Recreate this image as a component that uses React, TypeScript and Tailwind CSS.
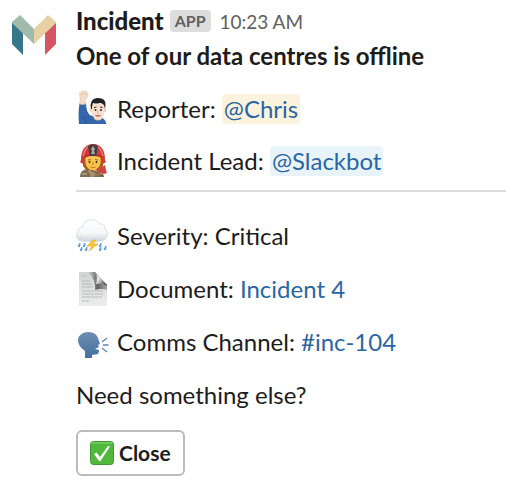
import type { ReactNode } from "react";

function Logo() {
  return (
    <svg viewBox="0 0 44 42" className="mt-[14px] h-[42px] w-11 shrink-0" aria-hidden="true">
      <path d="M0 8v22l11 11V14z" fill="#38768b" />
      <path d="M44 8v22L33 41V14z" fill="#d65563" />
      <path d="M0 9V8l8-7 14 14v15z" fill="#a1bbaa" />
      <path d="M44 9V8l-8-7-14 14v15z" fill="#e7d0a3" />
    </svg>
  );
}

function RaisedHand() {
  return (
    <svg viewBox="0 0 32 34" className="h-[34px] w-8 overflow-visible">
      <path d="M3 32Q2 20 3.500 11.500l6-.5q0 8 4 12l6 2h3q7 1 8 7z" fill="#3566ad" />
      <path d="M9.500 12q0 8 4 12M7 24q3 3 3 8" fill="none" stroke="#274f92" strokeWidth=".8" />
      <path d="M4 12 4 5 3.500 1q.7-1.200 1.500 0l.8 2L6 -1q1-1 1.600 0l.4 3 1-3q1-.8 1.500.3L10 3l1-2q1-.5 1.200.8L11 6l-2 2 .5 4q-3 1-5.500 0z" fill="#f3dcc8" stroke="#dcbda4" strokeWidth=".5" />
      <path d="M18 23h8v4q-4 3-8 0z" fill="#e6c0a3" />
      <ellipse cx="15" cy="18" rx="1.200" ry="2" fill="#e9c7ad" />
      <ellipse cx="29" cy="18" rx="1.200" ry="2" fill="#e9c7ad" />
      <path d="M15.500 12h13v7q-.5 8-6.500 9-6-1-6.500-9z" fill="#f6e0cd" />
      <path d="M15 17Q13 7 21 6q9-.5 8.500 7L29 17l-1-4q-2-2-4-2-4 1-7 0-1 2-1 6z" fill="#24211f" />
      <path d="m18 15.500 2.500-.5m3.500 0 2.500.5" stroke="#352b26" />
      <circle cx="19.500" cy="18" r="1" fill="#3b2d28" />
      <circle cx="25" cy="18" r="1" fill="#3b2d28" />
      <path d="m22 18-.5 3.500h1.500" fill="none" stroke="#dcb295" strokeWidth=".8" />
      <path d="M19.500 23.500q2.500 2.500 5 0z" fill="#fff" stroke="#b0665a" strokeWidth=".8" />
    </svg>
  );
}

function Firefighter() {
  return (
    <svg viewBox="0 0 32 34" className="h-[34px] w-8 overflow-visible">
      <path d="M4 33q0-7 7-8h10q6 1 7 8z" fill="#7d6b56" />
      <path d="m11 25 4 8h3l4-8z" fill="#a3906c" />
      <path d="M6 30h5m10 0h5" stroke="#b9ad78" strokeWidth="1.500" />
      <path d="M7 12h20v10l-3 4H10l-3-4z" fill="#a85d22" />
      <path d="M9.500 12h15v7q-1 6-7.500 8-6.500-2-7.500-8z" fill="#fbc64b" />
      <path d="M5 16Q5 2 15 0h4q10 2 10 16l1 2-3 2q0-5-3-7-7-2-14 0-3 2-3 7l-3-2z" fill="#d33a3a" />
      <path d="M7 12q2-8 6-10m14 10q-2-8-6-10" fill="none" stroke="#ec7868" strokeWidth="1.500" />
      <path d="M8 13q9-4 18 0" fill="none" stroke="#a82228" strokeWidth="1.200" />
      <path d="m17 0 2 1 3 1-1 6-1 4h-6l-1-4-1-6 3-1z" fill="#3f3f42" />
      <path d="m17 2 2 3-1 2 1 3h-4l1-3-1-2z" fill="#aaa7a5" />
      <path d="m12 16 3-.5m4 0 3 .5" stroke="#8b5a1a" strokeWidth=".8" />
      <ellipse cx="13.500" cy="18" rx=".9" ry="1.200" fill="#4f3018" />
      <ellipse cx="20.500" cy="18" rx=".9" ry="1.200" fill="#4f3018" />
      <path d="M17 18v3M14.500 23q2.500 1.500 5 0" fill="none" stroke="#c2652d" strokeWidth=".9" />
      <path d="m15 26 12 6" stroke="#92502b" strokeWidth="1.200" />
      <path d="m21 24 5-1 3-2 1 5 1 3-3 1-3-2-4 1z" fill="#cf4444" />
    </svg>
  );
}

function StormCloud() {
  return (
    <svg viewBox="0 0 32 34" className="h-[34px] w-8 overflow-visible">
      <defs>
        <linearGradient id="cloud" x2="0" y2="1">
          <stop stopColor="#ffffff" />
          <stop offset=".6" stopColor="#f5f7f8" />
          <stop offset="1" stopColor="#cbd2da" />
        </linearGradient>
      </defs>
      <path d="M7 22C1 22-1 17 2 13q0-5 5-5Q8 1 15 1q6-1 8 4 6-1 6 5 4 3 2 7-1 5-7 5-2 1-5 0-4 2-7 0-3 1-5 0z" fill="url(#cloud)" stroke="#cfd5da" strokeWidth=".7" />
      <path d="M4 17q1 4 6 3 3 3 7 0 5 2 8-1" fill="none" stroke="#d5dce3" />
      <path d="m4 24-2 3q1 2 2 0zm5 0-2 3q1 2 2 0zm16 0-2 3q1 2 2 0zm5 3-2 3q1 2 2 0zM6 28l-2 3q1 2 2 0zm5 0-2 3q1 2 2 0zm14 0-2 3q1 2 2 0z" fill="#69aee0" stroke="#4a93cc" strokeWidth=".7" />
      <path d="m17 21-6 6h5l-3 5 9-7h-5l3-4z" fill="#ffc633" stroke="#f0a12a" strokeWidth=".6" />
    </svg>
  );
}

function PageIcon() {
  return (
    <svg viewBox="0 0 32 34" className="h-[34px] w-8 overflow-visible">
      <defs>
        <linearGradient id="paper" x2="0" y2="1">
          <stop stopColor="#d3d4d4" />
          <stop offset="1" stopColor="#ececec" />
        </linearGradient>
        <linearGradient id="fold" x2="1" y2=".7">
          <stop stopColor="#8e9190" />
          <stop offset=".4" stopColor="#e9eaea" />
          <stop offset=".75" stopColor="#8c8f8e" />
          <stop offset="1" stopColor="#4e5251" />
        </linearGradient>
        <linearGradient id="shade" x1="0" x2="1">
          <stop stopColor="#6e7271" stopOpacity="0" />
          <stop offset=".5" stopColor="#5e6261" />
          <stop offset="1" stopColor="#a8abaa" />
        </linearGradient>
      </defs>
      <path d="M3 0h16l12 13v21H3z" fill="url(#paper)" />
      <path d="M12 0h7l12 13v5q-6-2-12 0 1-10-7-18z" fill="url(#shade)" />
      <path d="M19 0q3 6 1 12 7-1 11 2v-1z" fill="url(#fold)" />
      <path d="M6 4h5M6 9h8M6 12h10M6 15h11M6 19h21M6 22h21M6 25h20M6 29h7" stroke="#a9acac" strokeWidth=".8" strokeDasharray="3 .6 5 .5" />
    </svg>
  );
}

function SpeakingHead() {
  return (
    <svg viewBox="0 0 32 34" className="h-[34px] w-8 overflow-visible">
      <defs>
        <linearGradient id="head" x2="0" y2="1">
          <stop stopColor="#6f8db0" />
          <stop offset="1" stopColor="#44709f" />
        </linearGradient>
      </defs>
      <path d="M9 33v-7Q2 21 2 15.500C2 10 7 7 12.500 7q7.500 0 9.500 6l2 6-2 1 1 2-4 2 4 1q0 5-4 4.500l-3 .5v3z" fill="url(#head)" />
      <path d="m26 17 5-4m-4 7h5.500m-6.500 3 5 4" stroke="#6185ab" strokeWidth="1.300" />
    </svg>
  );
}

function CheckIcon() {
  return (
    <svg viewBox="0 0 24 24" className="size-6" aria-hidden="true">
      <rect x=".5" y=".5" width="23" height="23" rx="3" fill="#50b83b" stroke="#3e9b32" />
      <path d="M2 2h20" stroke="#91d482" />
      <path d="m4 13 2.500-1.500L10 16l8-11 2 .5L10.500 20H9z" fill="#fff" />
    </svg>
  );
}

function Field({ icon, label, children }: { icon: ReactNode; label: string; children: ReactNode }) {
  return (
    <li className="flex h-8 items-center gap-[9px]">
      <span className="flex w-8 shrink-0 items-center" aria-hidden="true">{icon}</span>
      <span className="whitespace-nowrap">{label}: {children}</span>
    </li>
  );
}

export default function App() {
  return (
    <main className="flex items-start gap-5 bg-white pb-4 pl-3 font-['Lato',sans-serif] text-2xl leading-8 text-[#1d1c1d]">
      <Logo />
      <article className="min-w-0 grow pt-1">
        <header className="flex h-9 items-center gap-[6px]">
          <h1 className="pb-[2px] font-black">Incident</h1>
          <span className="mb-[2px] rounded-[4px] bg-[#dddddd] px-[5px] text-base leading-[22px] font-bold text-[#616061]">APP</span>
          <time className="ml-[3px] text-[19px] text-[#616061]">10:23 AM</time>
        </header>
        <h2 className="font-bold">One of our data centres is offline</h2>

        <ul className="mt-[21px] flex flex-col gap-5">
          <Field icon={<RaisedHand />} label="Reporter">
            <a href="#chris" className="rounded-[4px] bg-[#fbf3dd] px-[2px] pb-px text-[#2a66a3]">@Chris</a>
          </Field>
          <Field icon={<Firefighter />} label="Incident Lead">
            <a href="#slackbot" className="rounded-[4px] bg-[#e8f4fa] px-[2px] pb-px text-[#2a66a3]">@Slackbot</a>
          </Field>
        </ul>

        <hr className="mt-[13px] border-t-2 border-[#dddddd]" />

        <ul className="mt-7 flex flex-col gap-[21px]">
          <Field icon={<StormCloud />} label="Severity">Critical</Field>
          <Field icon={<PageIcon />} label="Document">
            <a href="#incident-4" className="text-[#2a66a3]">Incident 4</a>
          </Field>
          <Field icon={<SpeakingHead />} label="Comms Channel">
            <a href="#inc-104" className="text-[#2a66a3]">#inc-104</a>
          </Field>
        </ul>

        <p className="mt-[21px]">Need something else?</p>
        <button type="button" className="mt-[19px] flex h-[46px] items-center gap-[5px] rounded-md border-2 border-[#bbbbbb] px-3 text-[21px] font-bold">
          <CheckIcon />
          Close
        </button>
      </article>
    </main>
  );
}
